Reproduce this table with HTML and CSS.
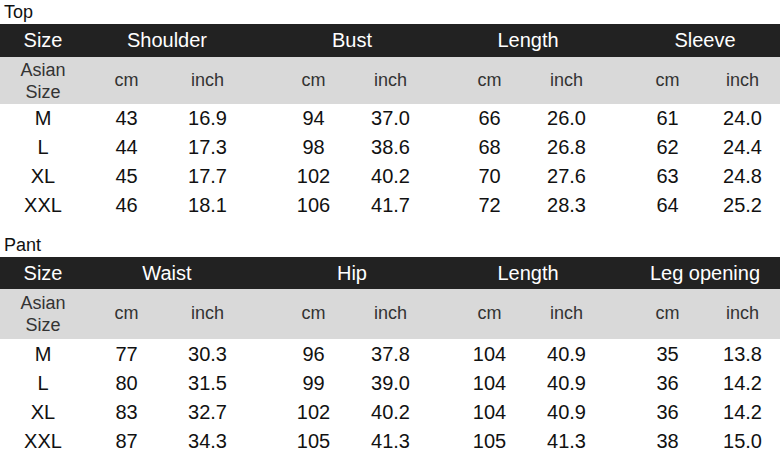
FILE: index.html
```html
<!DOCTYPE html>
<html>
<head>
<meta charset="utf-8">
<link rel="stylesheet" href="styles.css">
</head>
<body>
<section class="chart top">
  <div class="label">Top</div>
  <div class="grid head">
    <span>Size</span><span class="g">Shoulder</span><span class="g g2">Bust</span><span class="g g3">Length</span><span class="g g4">Sleeve</span>
  </div>
  <div class="grid sub">
    <span class="asian">Asian<br>Size</span><span>cm</span><span>inch</span><span>cm</span><span>inch</span><span>cm</span><span>inch</span><span>cm</span><span>inch</span>
  </div>
  <div class="grid data"><span>M</span><span>43</span><span>16.9</span><span>94</span><span>37.0</span><span>66</span><span>26.0</span><span>61</span><span>24.0</span></div>
  <div class="grid data"><span>L</span><span>44</span><span>17.3</span><span>98</span><span>38.6</span><span>68</span><span>26.8</span><span>62</span><span>24.4</span></div>
  <div class="grid data"><span>XL</span><span>45</span><span>17.7</span><span>102</span><span>40.2</span><span>70</span><span>27.6</span><span>63</span><span>24.8</span></div>
  <div class="grid data"><span>XXL</span><span>46</span><span>18.1</span><span>106</span><span>41.7</span><span>72</span><span>28.3</span><span>64</span><span>25.2</span></div>
</section>
<section class="chart pant">
  <div class="label">Pant</div>
  <div class="grid head">
    <span>Size</span><span class="g">Waist</span><span class="g g2">Hip</span><span class="g g3">Length</span><span class="g g4">Leg opening</span>
  </div>
  <div class="grid sub">
    <span class="asian">Asian<br>Size</span><span>cm</span><span>inch</span><span>cm</span><span>inch</span><span>cm</span><span>inch</span><span>cm</span><span>inch</span>
  </div>
  <div class="grid data"><span>M</span><span>77</span><span>30.3</span><span>96</span><span>37.8</span><span>104</span><span>40.9</span><span>35</span><span>13.8</span></div>
  <div class="grid data"><span>L</span><span>80</span><span>31.5</span><span>99</span><span>39.0</span><span>104</span><span>40.9</span><span>36</span><span>14.2</span></div>
  <div class="grid data"><span>XL</span><span>83</span><span>32.7</span><span>102</span><span>40.2</span><span>104</span><span>40.9</span><span>36</span><span>14.2</span></div>
  <div class="grid data"><span>XXL</span><span>87</span><span>34.3</span><span>105</span><span>41.3</span><span>105</span><span>41.3</span><span>38</span><span>15.0</span></div>
</section>
</body>
</html>
```
FILE: styles.css
```css
html, body {
  margin: 0;
  padding: 0;
  background: #ffffff;
  overflow: hidden;
}
body {
  width: 780px;
  font-family: "Liberation Sans", Arial, sans-serif;
  color: #111111;
}
.chart {
  display: flex;
  flex-direction: column;
}
.pant {
  margin-top: 13px;
}
.label {
  height: 24px;
  line-height: 24px;
  font-size: 18px;
  padding-left: 4px;
  color: #111111;
}
.grid {
  display: grid;
  grid-template-columns: 86px 81px 81px 104px 77px 99px 77px 100px 75px;
  align-items: center;
  text-align: center;
}
.grid > span:nth-child(4) { padding-left: 27px; }
.grid > span:nth-child(6) { padding-left: 22px; }
.grid > span:nth-child(8) { padding-left: 25px; }
.head {
  background: #222222;
  color: #ffffff;
  font-size: 20px;
  height: 33px;
}
.pant .head {
  height: 32px;
}
.head > span.g {
  grid-column: span 2;
  padding-left: 0;
}
.head > span.g2 { padding-left: 27px; }
.head > span.g3 { padding-left: 22px; }
.head > span.g4 { padding-left: 25px; }
.sub {
  background: #d9d9d9;
  color: #333333;
  font-size: 18px;
  height: 47px;
}
.pant .sub {
  height: 49px;
  padding-bottom: 1px;
}
.asian {
  line-height: 22px;
}
.data {
  height: 29px;
  font-size: 20px;
  color: #111111;
}
.pant .data {
  position: relative;
  top: 1px;
}
```
